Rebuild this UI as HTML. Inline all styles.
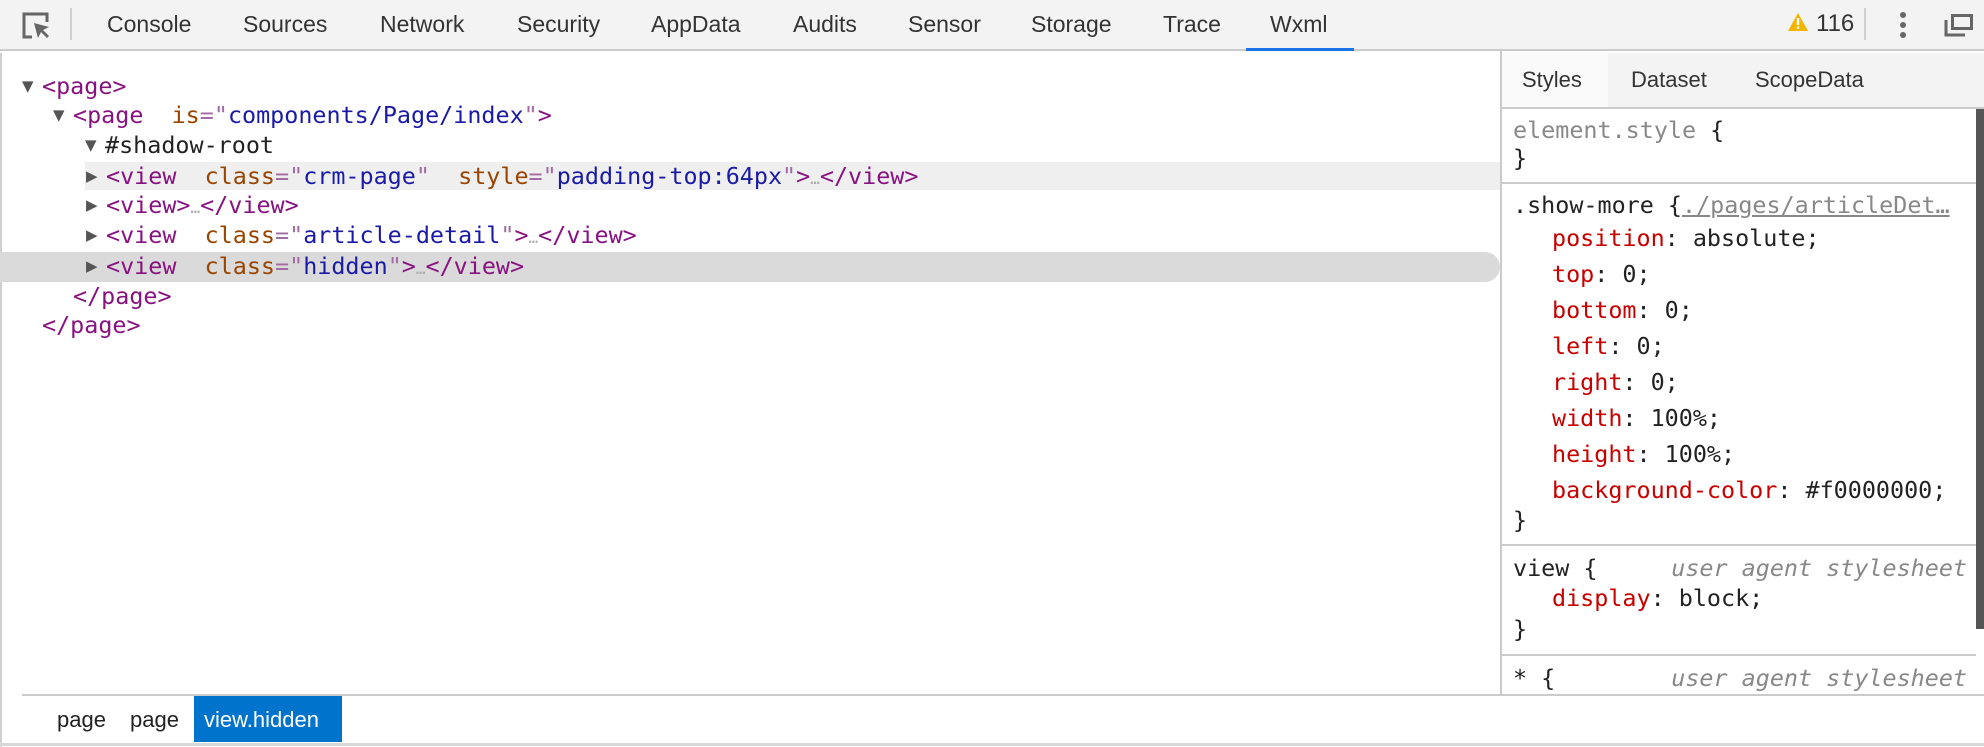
<!DOCTYPE html>
<html><head><meta charset="utf-8"><style>
*{margin:0;padding:0;box-sizing:border-box}
body{width:1984px;height:746px;overflow:hidden;background:#fff;position:relative;font-family:"Liberation Sans",Arial,sans-serif}
.abs{position:absolute}
.tb{left:0;top:0;width:1984px;height:51px;background:#f3f3f3;border-bottom:2px solid #cbcbcb}
.tab{position:absolute;top:10px;font-size:23px;color:#333;line-height:28px}
.mono{font-family:"DejaVu Sans Mono","Liberation Mono",monospace;font-size:23.4px;white-space:pre;line-height:30px}
.row{position:absolute;height:30px}
.t{color:#881280}.an{color:#994500}.av{color:#1a1aa6}.q{color:#a36ba3}.el{color:#aaa;font-size:16px}
.tri{position:absolute;font-size:15px;color:#555;font-family:"DejaVu Sans",sans-serif}
.p{color:#c80000}
.sl{position:absolute;left:1513px}
.ua{position:absolute;right:17px;color:#888;font-style:italic}
</style></head><body>
<div class="abs tb"></div>
<svg class="abs" style="left:21px;top:11px" width="30" height="30" viewBox="0 0 30 30"><path d="M11 26H3V3h23v8" fill="none" stroke="#666" stroke-width="3"/><path d="M13 12l4 15 3-6 6 6 2-2-6-6 6-3z" fill="#666"/></svg>
<div class="abs" style="left:70px;top:8px;width:2px;height:32px;background:#d0d0d0"></div>
<div class="tab" style="left:107px">Console</div>
<div class="tab" style="left:243px">Sources</div>
<div class="tab" style="left:380px">Network</div>
<div class="tab" style="left:517px">Security</div>
<div class="tab" style="left:651px">AppData</div>
<div class="tab" style="left:793px">Audits</div>
<div class="tab" style="left:908px">Sensor</div>
<div class="tab" style="left:1031px">Storage</div>
<div class="tab" style="left:1163px">Trace</div>
<div class="tab" style="left:1270px">Wxml</div>
<div class="abs" style="left:1246px;top:48px;width:108px;height:3px;background:#1a73e8"></div>
<svg class="abs" style="left:1787px;top:12px" width="22" height="20" viewBox="0 0 22 20"><path d="M11 1L21 19H1z" fill="#f4b400"/><rect x="9.8" y="6" width="2.4" height="7" fill="#fff"/><rect x="9.8" y="14.5" width="2.4" height="2.4" fill="#fff"/></svg>
<div class="tab" style="left:1816px;font-size:24px">116</div>
<div class="abs" style="left:1864px;top:8px;width:2px;height:32px;background:#d0d0d0"></div>
<div class="abs" style="left:1900px;top:12px;width:6px;height:6px;border-radius:3px;background:#666"></div>
<div class="abs" style="left:1900px;top:22px;width:6px;height:6px;border-radius:3px;background:#666"></div>
<div class="abs" style="left:1900px;top:32px;width:6px;height:6px;border-radius:3px;background:#666"></div>
<svg class="abs" style="left:1944px;top:13px" width="30" height="24" viewBox="0 0 30 24"><path d="M2 7v15h19" fill="none" stroke="#666" stroke-width="3"/><rect x="8.5" y="2.5" width="19" height="13" fill="none" stroke="#666" stroke-width="3"/></svg>

<!-- tree -->
<div class="abs" style="left:0;top:53px;width:2px;height:694px;background:#d0d0d0"></div>
<div class="abs" style="left:85px;top:162px;width:1415px;height:28px;background:#efefef"></div>
<div class="abs" style="left:0;top:252px;width:1500px;height:30px;background:#dadada;border-radius:0 15px 15px 0"></div>
<div class="mono">
<span class="tri" style="left:22px;top:71px">▼</span><div class="row" style="left:42px;top:71px"><span class="t">&lt;page&gt;</span></div>
<span class="tri" style="left:53px;top:100px">▼</span><div class="row" style="left:73px;top:100px"><span class="t">&lt;page</span>  <span class="an">is</span><span class="q">="</span><span class="av">components/Page/index</span><span class="q">"</span><span class="t">&gt;</span></div>
<span class="tri" style="left:85px;top:130px">▼</span><div class="row" style="left:105px;top:130px;color:#222">#shadow-root</div>
<span class="tri" style="left:86px;top:161px">▶</span><div class="row" style="left:106px;top:161px"><span class="t">&lt;view</span>  <span class="an">class</span><span class="q">="</span><span class="av">crm-page</span><span class="q">"</span>  <span class="an">style</span><span class="q">="</span><span class="av">padding-top:64px</span><span class="q">"</span><span class="t">&gt;</span><span class="el">…</span><span class="t">&lt;/view&gt;</span></div>
<span class="tri" style="left:86px;top:190px">▶</span><div class="row" style="left:106px;top:190px"><span class="t">&lt;view&gt;</span><span class="el">…</span><span class="t">&lt;/view&gt;</span></div>
<span class="tri" style="left:86px;top:220px">▶</span><div class="row" style="left:106px;top:220px"><span class="t">&lt;view</span>  <span class="an">class</span><span class="q">="</span><span class="av">article-detail</span><span class="q">"</span><span class="t">&gt;</span><span class="el">…</span><span class="t">&lt;/view&gt;</span></div>
<span class="tri" style="left:86px;top:251px">▶</span><div class="row" style="left:106px;top:251px"><span class="t">&lt;view</span>  <span class="an">class</span><span class="q">="</span><span class="av">hidden</span><span class="q">"</span><span class="t">&gt;</span><span class="el">…</span><span class="t">&lt;/view&gt;</span></div>
<div class="row" style="left:73px;top:281px"><span class="t">&lt;/page&gt;</span></div>
<div class="row" style="left:42px;top:310px"><span class="t">&lt;/page&gt;</span></div>
</div>

<!-- right panel -->
<div class="abs" style="left:1500px;top:51px;width:2px;height:643px;background:#cbcbcb"></div>
<div class="abs" style="left:1502px;top:53px;width:482px;height:56px;background:#f3f3f3;border-bottom:2px solid #cbcbcb"></div>
<div class="abs" style="left:1502px;top:53px;width:106px;height:54px;background:#fafafa"></div>
<div class="tab" style="left:1522px;top:66px;font-size:22px">Styles</div>
<div class="tab" style="left:1631px;top:66px;font-size:22px">Dataset</div>
<div class="tab" style="left:1755px;top:66px;font-size:22px">ScopeData</div>
<div class="abs" style="left:1976px;top:109px;width:8px;height:520px;background:#555"></div>
<div class="abs" style="left:1502px;top:182px;width:474px;height:2px;background:#cbcbcb"></div>
<div class="abs" style="left:1502px;top:544px;width:474px;height:2px;background:#cbcbcb"></div>
<div class="abs" style="left:1502px;top:654px;width:474px;height:2px;background:#cbcbcb"></div>
<div class="mono" style="color:#222">
<div class="sl" style="top:116px;line-height:28px"><span style="color:#888">element.style</span> {<br>}</div>
<div class="sl" style="top:190px">.show-more {<span style="color:#888;text-decoration:underline">./pages/articleDet…</span></div>
<div class="sl" style="left:1552px;top:220px;line-height:36px"><span class="p">position</span>: absolute;<br><span class="p">top</span>: 0;<br><span class="p">bottom</span>: 0;<br><span class="p">left</span>: 0;<br><span class="p">right</span>: 0;<br><span class="p">width</span>: 100%;<br><span class="p">height</span>: 100%;<br><span class="p">background-color</span>: #f0000000;</div>
<div class="sl" style="top:505px">}</div>
<div class="sl" style="top:553px">view {</div>
<div class="ua" style="top:553px">user agent stylesheet</div>
<div class="sl" style="left:1552px;top:583px"><span class="p">display</span>: block;</div>
<div class="sl" style="top:614px">}</div>
<div class="sl" style="top:663px">* {</div>
<div class="ua" style="top:663px">user agent stylesheet</div>
</div>

<!-- breadcrumbs -->
<div class="abs" style="left:22px;top:694px;width:1962px;height:2px;background:#cbcbcb"></div>
<div class="abs" style="left:194px;top:696px;width:148px;height:46px;background:#0073cc"></div>
<div class="tab" style="left:57px;top:706px;font-size:22px;color:#222">page</div>
<div class="tab" style="left:130px;top:706px;font-size:22px;color:#222">page</div>
<div class="tab" style="left:204px;top:706px;font-size:22px;color:#fff">view.hidden</div>
<div class="abs" style="left:0;top:743px;width:1984px;height:3px;background:#d8d8d8"></div>
</body></html>
